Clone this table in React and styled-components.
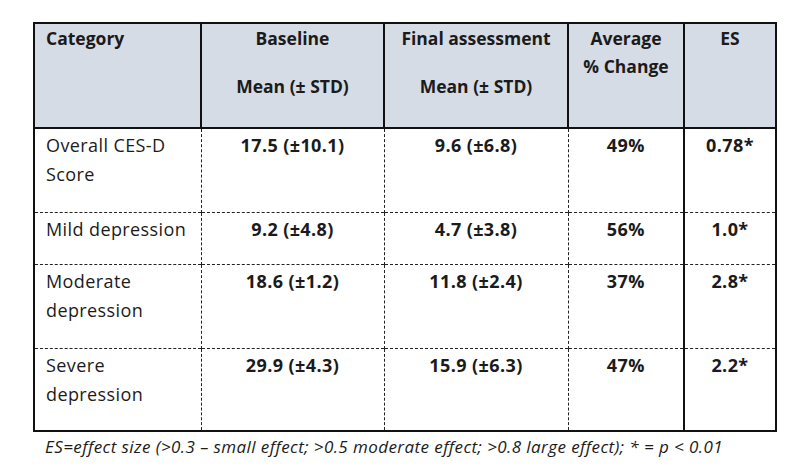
import React from 'react'
import styled, { createGlobalStyle } from 'styled-components'

const GlobalStyle = createGlobalStyle`
  html, body {
    margin: 0;
    padding: 0;
    background: #ffffff;
  }
  body {
    font-family: "Open Sans", Lato, sans-serif;
    color: #1b1b1b;
  }
`

const Page = styled.div`
  width: 800px;
  height: 469px;
  padding: 22px 0 0 33px;
  box-sizing: border-box;
`

const Table = styled.table`
  border-collapse: collapse;
  table-layout: fixed;
  width: 742px;
  border: 2px solid #111;
`

const HeadCell = styled.th`
  background: #d6dce5;
  border: 2px solid #111;
  height: 105px;
  padding: 0 4px 0 ${p => (p.$left ? '11px' : '4px')};
  vertical-align: top;
  text-align: ${p => (p.$left ? 'left' : 'center')};
  font-size: 17.5px;
  font-weight: 700;
  line-height: 28px;
  box-sizing: border-box;
`

const HeadLine = styled.div`
  margin-top: ${p => p.$gap || 0}px;
`

const Cell = styled.td`
  height: ${p => p.$h}px;
  padding: 2px 4px 0 ${p => (p.$left ? '11px' : '4px')};
  vertical-align: top;
  text-align: ${p => (p.$left ? 'left' : 'center')};
  font-size: 18px;
  letter-spacing: 0.4px;
  font-weight: ${p => (p.$left ? 400 : 700)};
  line-height: 29px;
  white-space: pre-line;
  border-top: 1px dashed #222;
  border-right: ${p => (p.$solid ? '2px solid #111' : '1px dashed #222')};
  box-sizing: border-box;
`

const Note = styled.div`
  margin-top: 4px;
  padding-left: 12px;
  font-style: italic;
  font-size: 17px;
  letter-spacing: 0.42px;
  line-height: 22px;
  color: #1b1b1b;
`

const rows = [
  { cat: 'Overall CES-D\nScore', base: '17.5 (±10.1)', fin: '9.6 (±6.8)', avg: '49%', es: '0.78*', h: 84 },
  { cat: 'Mild depression', base: '9.2 (±4.8)', fin: '4.7 (±3.8)', avg: '56%', es: '1.0*', h: 52 },
  { cat: 'Moderate\ndepression', base: '18.6 (±1.2)', fin: '11.8 (±2.4)', avg: '37%', es: '2.8*', h: 84 },
  { cat: 'Severe\ndepression', base: '29.9 (±4.3)', fin: '15.9 (±6.3)', avg: '47%', es: '2.2*', h: 83 },
]

const App = () => {
  return (
    <Page>
      <GlobalStyle />
      <Table>
        <colgroup>
          <col style={{ width: 167 }} />
          <col style={{ width: 183 }} />
          <col style={{ width: 184 }} />
          <col style={{ width: 116 }} />
          <col style={{ width: 92 }} />
        </colgroup>
        <thead>
          <tr>
            <HeadCell $left>Category</HeadCell>
            <HeadCell>
              <HeadLine>Baseline</HeadLine>
              <HeadLine $gap={20}>Mean (± STD)</HeadLine>
            </HeadCell>
            <HeadCell>
              <HeadLine>Final assessment</HeadLine>
              <HeadLine $gap={20}>Mean (± STD)</HeadLine>
            </HeadCell>
            <HeadCell>
              <HeadLine>Average</HeadLine>
              <HeadLine>% Change</HeadLine>
            </HeadCell>
            <HeadCell>ES</HeadCell>
          </tr>
        </thead>
        <tbody>
          {rows.map(r => (
            <tr key={r.cat}>
              <Cell $left $h={r.h}>{r.cat}</Cell>
              <Cell $h={r.h}>{r.base}</Cell>
              <Cell $h={r.h}>{r.fin}</Cell>
              <Cell $h={r.h} $solid>{r.avg}</Cell>
              <Cell $h={r.h} $solid>{r.es}</Cell>
            </tr>
          ))}
        </tbody>
      </Table>
      <Note>ES=effect size (&gt;0.3 – small effect; &gt;0.5 moderate effect; &gt;0.8 large effect); * = p &lt; 0.01</Note>
    </Page>
  )
}

export default App
